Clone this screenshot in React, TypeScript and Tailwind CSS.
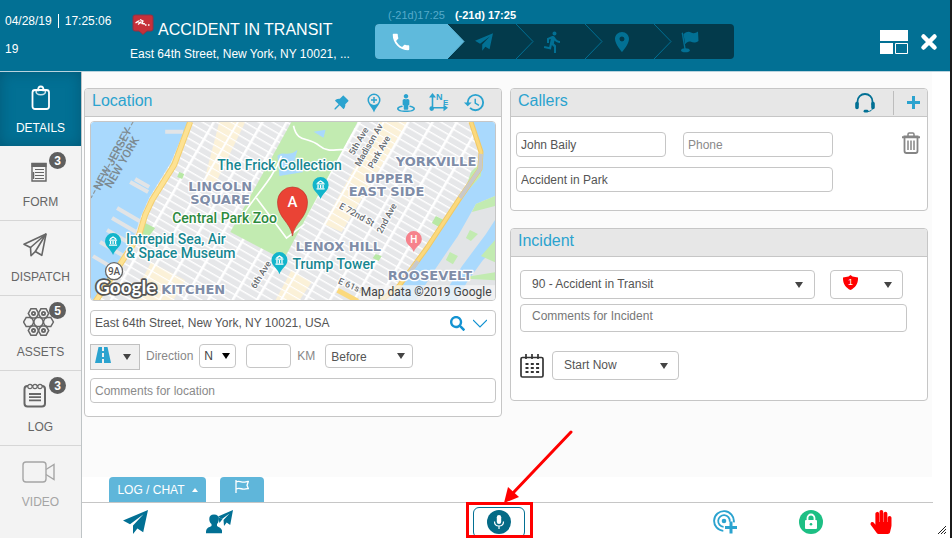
import React, { useState } from 'react';
import { FaHandPaper, FaSearch, FaStreetView } from 'react-icons/fa';
import { AiFillPushpin } from 'react-icons/ai';
import { MdDirectionsRun, MdHistory, MdLocationOn, MdPhone } from 'react-icons/md';

type IconProps = { className?: string };

const PlaneIcon: React.FC<IconProps> = ({ className }) => (
  <svg viewBox="0 0 25 24" fill="currentColor" className={className}>
    <path d="M25 0 0 10.4l7 3.9L20.5 4.2 10 15.6V24l4.4-5.4 5.8 3.6z" />
  </svg>
);

const RaceFlagIcon: React.FC<IconProps> = ({ className }) => (
  <svg viewBox="0 0 18 22" fill="currentColor" className={className}>
    <path d="M.6 2 2 1.6l2.800 17H3.400z" />
    <path d="M2.500 3.200C5.500.4 8 .2 10 1.400s4.200 1.200 7-.9l.5 9.500c-3 2-5.500 1.700-7.500.8s-4 0-5.800 2.400z" />
    <ellipse cx="4.400" cy="19.300" rx="4.300" ry="2" />
  </svg>
);

const ClipboardIcon: React.FC<IconProps> = ({ className }) => (
  <svg viewBox="0 0 20 26" fill="none" stroke="currentColor" className={className}>
    <rect x="1.500" y="5" width="16.500" height="19" rx="2.500" strokeWidth="1.800" />
    <path d="M5 5.500c0 3 1 4.300 4.800 4.300s4.800-1.300 4.800-4.300" strokeWidth="1.600" opacity=".8" />
    <path d="M5 5.400h2.200C7 2.600 8 1.500 9.800 1.500s2.800 1.100 2.600 3.900h2.200" strokeWidth="1.800" />
  </svg>
);

const FormIcon: React.FC<IconProps> = ({ className }) => (
  <svg viewBox="0 0 16 20" fill="none" stroke="currentColor" className={className}>
    <path d="M1 1.500h14V19H1z" strokeWidth="1.400" />
    <path d="M.5 3h15" strokeWidth="4" />
    <path d="M4 7.500h9M4 10.500h9M4 13.500h9M4 16.500h9" strokeWidth="1" />
    <path d="M2.500 10v7" strokeWidth="1.500" />
  </svg>
);

const DispatchIcon: React.FC<IconProps> = ({ className }) => (
  <svg
    viewBox="0 0 24 24"
    fill="none"
    stroke="currentColor"
    strokeWidth="1.600"
    strokeLinejoin="round"
    className={className}
  >
    <path d="M23 1 1 11.200l6.500 3.300.5 8.300 4.300-4.300 6.500 3.800z" />
    <path d="M23 1 7.500 14.500M23 1 12.300 18.500" />
  </svg>
);

const hex = (cx: number, cy: number) =>
  `M${cx - 2.6} ${cy - 4.6}h5.200l2.600 4.600-2.600 4.600h-5.200l-2.600-4.600z`;

const AssetsIcon: React.FC<IconProps> = ({ className }) => (
  <svg viewBox="0 0 32 28" fill="none" stroke="currentColor" className={className}>
    {[[10.500, 5.400], [20.500, 5.400], [5.800, 14], [15.500, 14], [25.200, 14], [10.500, 22.600], [20.500, 22.600]].map(([x, y]) => (
      <path key={`${x}-${y}`} d={hex(x, y)} strokeWidth="1.500" />
    ))}
    {[[10.500, 5.400], [20.500, 5.400], [10.500, 22.600], [20.500, 22.600]].map(([x, y]) => (
      <circle key={`${x}-${y}`} cx={x} cy={y} r="1.600" strokeWidth="1.800" />
    ))}
  </svg>
);

const LogIcon: React.FC<IconProps> = ({ className }) => (
  <svg viewBox="0 0 24 26" fill="none" stroke="currentColor" className={className}>
    <rect x="1.500" y="4" width="20.500" height="20.500" rx="3" strokeWidth="2" />
    <circle cx="7" cy="4.500" r="2.200" strokeWidth="1.200" fill="#f3f3f3" />
    <circle cx="12" cy="4.500" r="2.200" strokeWidth="1.200" fill="#f3f3f3" />
    <circle cx="17" cy="4.500" r="2.200" strokeWidth="1.200" fill="#f3f3f3" />
    <path d="M6 12h12M6 15.200h12M6 18.400h12" strokeWidth="1.800" />
  </svg>
);

const VideoIcon: React.FC<IconProps> = ({ className }) => (
  <svg viewBox="0 0 34 22" fill="none" stroke="currentColor" strokeWidth="1.400" className={className}>
    <rect x="1" y="1" width="23" height="20" rx="3" />
    <path d="m24 8.500 8-5v15l-8-5" />
  </svg>
);

const PinPlusIcon: React.FC<IconProps> = ({ className }) => (
  <svg viewBox="0 0 14 20" className={className}>
    <path
      d="M7 .5a6.500 6.500 0 0 1 6.500 6.500c0 4-4.500 7-6.500 12.500C5 14 .5 11 .5 7A6.500 6.500 0 0 1 7 .5z"
      fill="currentColor"
    />
    <circle cx="7" cy="7" r="5" fill="#e7e7e7" />
    <path d="M7 4v6M4 7h6" stroke="currentColor" strokeWidth="1.500" />
  </svg>
);

const AxesIcon: React.FC<IconProps> = ({ className }) => (
  <svg viewBox="0 0 20 20" fill="currentColor" className={className}>
    <path d="M3.500 0 7 4.500H4.300V14h10.200v-2.600l4.500 3.400-4.500 3.400v-2.600H5a2.300 2.300 0 1 1-2.300-2.300V4.500H0z" />
    <text x="7" y="7" fontSize="9" fontWeight="700" fontFamily="Liberation Sans, sans-serif">N</text>
    <text x="14" y="12" fontSize="8" fontWeight="700" fontFamily="Liberation Sans, sans-serif">E</text>
  </svg>
);

const HeadsetIcon: React.FC<IconProps> = ({ className }) => (
  <svg viewBox="0 0 20 20" fill="none" stroke="currentColor" className={className}>
    <path d="M2.500 12V8.500a7.500 7.500 0 0 1 15 0V12" strokeWidth="1.800" />
    <path d="M2 10.500v4M18 10.500v4" strokeWidth="3.600" strokeLinecap="round" />
    <path d="M17.500 15c0 2-2 3.500-5 3.500" strokeWidth="1" />
    <path d="M10 18.200h2" strokeWidth="2.800" strokeLinecap="round" />
  </svg>
);

const TrashIcon: React.FC<IconProps> = ({ className }) => (
  <svg viewBox="0 0 18 22" fill="none" stroke="currentColor" className={className}>
    <path d="M0 5.200h18" strokeWidth="2" />
    <path d="M1.500 4.200h15M6 4V2.200Q6 1 7.200 1h3.600Q12 1 12 2.200V4" strokeWidth="1.500" />
    <path d="M2.500 6v13q0 2 2 2h9q2 0 2-2V6" strokeWidth="1.800" />
    <path d="M6 8.500v9.500M9 8.500v9.500M12 8.500v9.500" strokeWidth="1.500" />
  </svg>
);

const CalendarIcon: React.FC<IconProps> = ({ className }) => (
  <svg viewBox="0 0 24 24" fill="none" stroke="currentColor" className={className}>
    <rect x="1" y="3.500" width="22" height="19.500" rx="1.500" strokeWidth="1.700" />
    <path d="M6 0v5M12 0v5M18 0v5" strokeWidth="1.700" />
    <path d="M5.500 10h14M5.500 14h14M5.500 18h14" strokeWidth="2.200" strokeDasharray="3 2.300" />
  </svg>
);

const RoadIcon: React.FC<IconProps> = ({ className }) => (
  <svg viewBox="0 0 16 16" className={className}>
    <path d="M3.500 0h9L16 16H0z" fill="currentColor" />
    <path d="M8 0v4M8 6v4M8 12v4" stroke="#f0f0f0" strokeWidth="2" />
  </svg>
);

const FlagIcon: React.FC<IconProps> = ({ className }) => (
  <svg viewBox="0 0 14 13" fill="none" stroke="currentColor" strokeWidth="1.300" className={className}>
    <path d="M1 0v13M1 2c3-1.500 5 0 7 .2s4-1 5.300-.7L12 5.200l1.300 3.300c-2 0-3.300.8-5.300.6S4 7.500 1 9" />
  </svg>
);

const PersonPlaneIcon: React.FC<IconProps> = ({ className }) => (
  <svg viewBox="0 0 27 24" fill="currentColor" className={className}>
    <path d="M8 4.500c3.600 0 5 2 4.800 5-.2 2-.8 3.500-1.800 4.500v2c2 1.300 4.500 2 5 4.500v2.700H0C-.3 17.500 3 17.500 5.500 16v-2C4.300 13 3.400 11.500 3.300 9.500 3.100 6.500 4.500 4.500 8 4.500z" />
    <path d="M27 0 12 6.500l4 2.500L23.500 3.500 17.500 10l.5 6 2.700-3.500 3.500 2.500z" />
    <path d="m12 7 1.500 6 3-4z" />
  </svg>
);

const MicIcon: React.FC<IconProps> = ({ className }) => (
  <svg viewBox="0 0 24 24" className={className}>
    <circle cx="12" cy="12" r="12" fill="#046a86" />
    <rect x="9.800" y="5" width="4.400" height="9" rx="2.200" fill="#fff" />
    <path d="M7.500 11.500c0 6 9 6 9 0M12 16v3" fill="none" stroke="#fff" strokeWidth="1.200" />
  </svg>
);

const TargetPlusIcon: React.FC<IconProps> = ({ className }) => (
  <svg viewBox="0 0 24 24" fill="none" stroke="currentColor" className={className}>
    <circle cx="11" cy="11" r="9.900" strokeWidth="1.900" strokeDasharray="47 15.200" transform="rotate(94 11 11)" />
    <circle cx="11" cy="11" r="5.800" strokeWidth="1.800" strokeDasharray="27 9.500" transform="rotate(94 11 11)" />
    <circle cx="11" cy="11" r="2.300" fill="currentColor" stroke="none" />
    <path d="M18 11.500v12M12 17.500h12" strokeWidth="3" />
  </svg>
);

const LockIcon: React.FC<IconProps> = ({ className }) => (
  <svg viewBox="0 0 24 24" className={className}>
    <circle cx="12" cy="12" r="12" fill="#1dbf84" />
    <path d="M8.500 11V8a3.500 3.500 0 0 1 7 0v3" fill="none" stroke="#fff" strokeWidth="1.800" />
    <rect x="6" y="10" width="12" height="9" rx="1" fill="#fff" />
    <circle cx="12" cy="14.200" r="1.300" fill="#1dbf84" />
  </svg>
);

const LayoutIcon: React.FC<IconProps> = ({ className }) => (
  <svg viewBox="0 0 28 24" className={className}>
    <path d="M0 0h28v11H0zM0 13h13v11H0z" fill="#fff" />
    <path d="M15.500 13.500h12v10h-12z" fill="none" stroke="#fff" />
  </svg>
);

const IncidentBadge: React.FC<IconProps> = ({ className }) => (
  <svg viewBox="0 0 22 21" className={className}>
    <path
      d="M3 1h16q2 0 2 2v12q0 2-2 2h-4l-4 3.500L7 17H3q-2 0-2-2V3q0-2 2-2z"
      fill="#c6303a"
      stroke="#8c3347"
    />
    <path
      d="M3.500 9c2-1 2.500-2 4-2.500M6 10.500l3.500-3M8 5.500l3 1.500-1 2.500 3 .5M5 7.500l4 1.500M13 11h1.500M16 11h1.500"
      fill="none"
      stroke="#fff"
      strokeWidth="1.300"
    />
  </svg>
);

const Caret: React.FC<IconProps> = ({ className }) => (
  <svg viewBox="0 0 8 6" fill="currentColor" className={className}>
    <path d="M0 0h8L4 6z" />
  </svg>
);

interface SelectProps {
  label: string;
  options: string[];
  className: string;
  caretClass: string;
}

const Select: React.FC<SelectProps> = ({ label, options, className, caretClass }) => (
  <div className="relative">
    <select
      aria-label={label}
      className={`block appearance-none rounded border border-[#c6c6c6] bg-white ${className}`}
    >
      {options.map((option) => (
        <option key={option}>{option}</option>
      ))}
    </select>
    <Caret className={`pointer-events-none absolute inset-y-0 my-auto h-[6px] w-2 ${caretClass}`} />
  </div>
);

const steps = [
  { name: 'Call', icon: <MdPhone className="size-[22px]" /> },
  { name: 'Dispatch', icon: <PlaneIcon className="h-[18px] w-[18px]" /> },
  { name: 'En route', icon: <MdDirectionsRun className="size-6" /> },
  { name: 'On scene', icon: <MdLocationOn className="size-6" /> },
  { name: 'Finish', icon: <RaceFlagIcon className="h-[22px] w-[18px]" /> },
];

const Header: React.FC = () => (
  <header className="flex h-[72px] shrink-0 border-b border-[#b9d3de] bg-[#027094] text-white">
    <div className="w-[130px] pl-[5px] pt-3 text-xs">
      <div className="flex h-[18px] items-center">
        <span>04/28/19</span>
        <span className="mx-[6px] h-[14px] w-px bg-white" />
        <span>17:25:06</span>
      </div>
      <div className="mt-[10px] leading-[18px]">19</div>
    </div>
    <div className="w-[245px] pt-[10px]">
      <h1 className="flex items-center text-base leading-6">
        <IncidentBadge className="mr-1 mb-1 ml-[2px] h-[21px] w-[22px]" />
        <span className="mt-2">ACCIDENT IN TRANSIT</span>
      </h1>
      <p className="mt-1 text-xs leading-4">East 64th Street, New York, NY 10021, ...</p>
    </div>
    <div className="pt-2">
      <div className="flex h-4 gap-[10px] pl-[13px] text-[11px] leading-[15px]">
        <span className="text-[#55abcb]">(-21d)17:25</span>
        <span className="font-bold">(-21d) 17:25</span>
      </div>
      <ol className="flex h-[35px] overflow-hidden rounded bg-[#033a4b]">
        {steps.map((step, i) => (
          <li
            key={step.name}
            aria-label={step.name}
            className={
              i === 0
                ? 'relative flex w-[72px] items-center justify-center bg-[#5fbadc] pr-5'
                : i === steps.length - 1
                  ? 'flex w-[80px] items-center justify-center pr-2 text-[#027094]'
                  : 'relative flex w-[69px] items-center justify-center pl-1 text-[#027094]'
            }
          >
            {step.icon}
            {i < steps.length - 1 && (
              <svg viewBox="0 0 18 35" className="absolute left-full top-0 h-[35px] w-[18px]">
                <path
                  d="M0 0l17 17.500L0 35"
                  fill={i === 0 ? '#5fbadc' : 'none'}
                  stroke={i === 0 ? '#5fbadc' : '#027094'}
                />
              </svg>
            )}
          </li>
        ))}
      </ol>
    </div>
    <div className="ml-auto flex items-center gap-3 pr-3 pt-3">
      <button type="button" aria-label="Change layout">
        <LayoutIcon className="h-6 w-7" />
      </button>
      <button type="button" aria-label="Close">
        <svg viewBox="0 0 18 18" className="size-[18px]">
          <path d="m3.500 3.500 11 11m0-11-11 11" stroke="#fff" strokeWidth="4.500" strokeLinecap="round" />
        </svg>
      </button>
    </div>
  </header>
);

const tabs = [
  { name: 'DETAILS', icon: <ClipboardIcon className="h-[26px] w-5" /> },
  { name: 'FORM', icon: <FormIcon className="mr-1 h-5 w-4" />, count: 3 },
  { name: 'DISPATCH', icon: <DispatchIcon className="mr-3 mb-1 size-6" /> },
  { name: 'ASSETS', icon: <AssetsIcon className="mr-1 h-7 w-8" />, count: 5 },
  { name: 'LOG', icon: <LogIcon className="mr-3 mb-1 h-[26px] w-6" />, count: 3 },
  { name: 'VIDEO', icon: <VideoIcon className="mr-1 h-[22px] w-[34px]" />, disabled: true },
];

const Sidebar: React.FC = () => {
  const [active, setActive] = useState('DETAILS');

  return (
    <nav className="flex w-[82px] shrink-0 flex-col border-r border-[#bfc4c6] bg-[#f3f3f3]">
      {tabs.map((tab) => (
        <button
          key={tab.name}
          type="button"
          disabled={tab.disabled}
          onClick={() => setActive(tab.name)}
          className={
            active === tab.name
              ? 'relative flex h-[74px] flex-col items-center bg-[#027094] pt-[10px] text-xs text-white shadow-[inset_0_0_14px_#035a78]'
              : tab.disabled
                ? 'relative flex h-[75px] flex-col items-center pt-[10px] text-xs text-[#a5a5a5]'
                : 'relative flex h-[75px] flex-col items-center border-b border-[#d6d6d6] pt-[10px] text-xs text-[#666]'
          }
        >
          <span className="flex h-[31px] items-center justify-center">{tab.icon}</span>
          <span className="mt-[5px] leading-5">{tab.name}</span>
          {tab.count && (
            <span className="absolute right-[15px] top-[6px] flex size-[17px] items-center justify-center rounded-full bg-[#5e5e5e] text-xs font-bold text-white">
              {tab.count}
            </span>
          )}
        </button>
      ))}
    </nav>
  );
};

interface PanelProps {
  title: string;
  tools?: React.ReactNode;
  children: React.ReactNode;
}

const Panel: React.FC<PanelProps> = ({ title, tools, children }) => (
  <section className="overflow-hidden rounded border border-[#c6c6c6] bg-white">
    <div className="flex h-7 items-center justify-between border-b border-[#c6c6c6] bg-[#e7e7e7] pl-[7px]">
      <h2 className="pb-1 text-base leading-5 text-[#2ba3cf]">{title}</h2>
      {tools}
    </div>
    {children}
  </section>
);

const poiText = { fontFamily: 'Roboto, sans-serif', fontWeight: 500, fontSize: 14 };
const areaText = { fontFamily: 'DejaVu Sans, sans-serif', fontWeight: 700, fontSize: 13 };
const streetText = { fontFamily: 'Roboto, sans-serif', fontWeight: 500, fontSize: 9 };

const CityMap: React.FC = () => (
  <svg
    viewBox="0 0 403 178"
    preserveAspectRatio="xMidYMid slice"
    role="img"
    aria-label="Map"
    className="block h-[178px] w-full"
  >
    <defs>
      <pattern id="blocks" width="21" height="7" patternUnits="userSpaceOnUse" patternTransform="rotate(30)">
        <rect width="21" height="7" fill="#e6e7e9" />
        <path d="M0 0h21" stroke="#fff" strokeWidth="2.800" />
        <path d="M0 0v7" stroke="#fff" strokeWidth="5" />
      </pattern>
      <pattern id="shops" width="21" height="7" patternUnits="userSpaceOnUse" patternTransform="rotate(30)">
        <rect width="21" height="7" fill="#fbf1d8" />
        <path d="M0 0h21" stroke="#fff" strokeWidth="2.200" />
        <path d="M0 0v7" stroke="#fff" strokeWidth="4" />
      </pattern>
    </defs>
    <rect width="403" height="178" fill="url(#blocks)" />
    <path d="m128 0 26 0-30 62-14 8zM288 0h28l-66 110-18-8zM200 148l20 12-12 18h-24zM60 140l34 18-12 20H40z" fill="url(#shops)" />

    {/* Hudson */}
    <path d="M0 0h97L80 40 58 76l-8 18-6 18-22 36-18 30H0z" fill="#a9d9fd" />
    <path d="M74 10h18M39 60l18 10M44 57l14 8M26 86l24 14M21 96l24 14M16 108l24 14M9 120l24 14M2 134l22 13" stroke="#e2e4e6" strokeWidth="4" />
    <path d="M42 0 0 76" fill="none" stroke="#8f989c" strokeWidth="1.200" strokeDasharray="4 2" />

    {/* parks */}
    <path d="M200 0h66L193 136l-12-4-42-22z" fill="#c2ebb1" />
    <path d="M186 34c6-6 10 2 20-6l-4 14 10 8-24 4zM222 10l12-2-2 8z" fill="#a9d9fd" />
    <path d="M202 4c4 18 14 10 26 20s22-2 32 8M150 96c14-24 30-36 40-62M165 76l30 40 18-14" fill="none" stroke="#fff" strokeWidth="1.600" />
    <path d="m78 46 4-8 4 4-4 8zM88 50l5 2-2 5-5-2zM52 100l12 6-6 8-10-2zM344 94l8 4-5 7-7-4zM284 132l6 2-3 5-6-3z" fill="#b8e8a5" />

    {/* East River and islands */}
    <path d="M381 0h22v178H300l36-52 33-50 20-30 2-16z" fill="#a9d9fd" />
    <path d="m389 54-18 20 8-24 10-10z" fill="#c2ebb1" />
    <path d="M403 74 384 82l-18 32-22 32-20 32h24l22-34 24-32 9-14z" fill="#e2e4e6" />
    <path d="m403 74-19 8-4 8 23-6zM378 108l8 4-7 7-5-3zM358 130l8 4-5 8-7-4z" fill="#c2ebb1" />
    <path d="m403 126-12 12-16 22-10 18h38z" fill="#e2e4e6" />
    <path d="m403 118-14 16 14 6zM366 156l37-6v8z" fill="#c2ebb1" />

    {/* highways */}
    <g fill="none" strokeLinejoin="round">
      <path d="M99 0 83 43 61 78l-7 15-6 20-24 37-20 30" stroke="#f3cf71" strokeWidth="6" />
      <path d="M99 0 83 43 61 78l-7 15-6 20-24 37-20 30" stroke="#fde293" strokeWidth="4" />
      <path d="m379 0 10 30-1 17-20 29-33 50-28 38-20 16" stroke="#f0c966" strokeWidth="5" />
      <path d="m379 0 10 30-1 17-20 29-33 50-28 38-20 16" stroke="#fbd97d" strokeWidth="3" />
      <path d="m389 32-1 15-20 29M326 139l-12 17" stroke="#c9c9c9" strokeWidth="4" />
      <path d="m246 168 22 12" stroke="#fbd97d" strokeWidth="5" />
    </g>

    {/* area names */}
    <g style={areaText} fill="#7f8da8" stroke="#fff" strokeWidth="2.500" paintOrder="stroke" strokeLinejoin="round">
      <text x="97" y="69">LINCOLN</text>
      <text x="99" y="82">SQUARE</text>
      <text x="304" y="44">YORKVILLE</text>
      <text x="273" y="61">UPPER</text>
      <text x="257" y="74">EAST SIDE</text>
      <text x="204" y="129">LENOX HILL</text>
      <text x="296" y="158">ROOSEVELT</text>
      <text x="70" y="172">KITCHEN</text>
    </g>

    {/* street names */}
    <g style={streetText} fill="#666b70" stroke="#fff" strokeWidth="2" paintOrder="stroke">
      <text transform="translate(262 34) rotate(-60)">5th Ave</text>
      <text transform="translate(268 45) rotate(-60)">Madison Av</text>
      <text transform="translate(281 47) rotate(-60)">Park Ave</text>
      <text transform="translate(247 86) rotate(29)">E 72nd St</text>
      <text transform="translate(290 112) rotate(-62)">2nd Ave</text>
      <text transform="translate(164 167) rotate(-58)">6th Ave</text>
      <text transform="translate(246 161) rotate(24)">E 61st</text>
    </g>
    <g style={{ ...streetText, fontSize: 11.5 }} fill="#7c8990">
      <text transform="translate(9 69) rotate(-62)">NEW JERSEY</text>
      <text transform="translate(20 67) rotate(-60)">NEW YORK</text>
    </g>

    {/* places */}
    <g style={poiText} fill="#178791" stroke="#fff" strokeWidth="2.500" paintOrder="stroke" strokeLinejoin="round">
      <text x="126" y="48">The Frick Collection</text>
      <text x="81" y="101" fill="#2d8a3e">Central Park Zoo</text>
      <text x="35" y="122">Intrepid Sea, Air</text>
      <text x="35" y="136">&amp; Space Museum</text>
      <text x="201" y="147">Trump Tower</text>
    </g>
    {[[22, 119], [229, 63], [188, 138]].map(([x, y]) => (
      <g key={x} transform={`translate(${x} ${y})`}>
        <path d="M0 14C-2 8-8 6-8 0a8 8 0 0 1 16 0c0 6-6 8-8 14z" fill="#12b5cb" />
        <path d="M-4-1h8M-4 4h8M-3-2 0-4l3 2M-2.500 0v3M0 0v3M2.500 0v3" stroke="#fff" strokeWidth="1.300" fill="none" />
      </g>
    ))}
    <path d="M322 130c-2-6-8-7-8-13a8 8 0 0 1 16 0c0 6-6 7-8 13z" fill="#f6828c" />
    <text x="322" y="121" textAnchor="middle" style={{ ...poiText, fontSize: 10 }} fill="#fff">H</text>

    {/* incident marker */}
    <path d="M201 114c-2-14-15-18-15-34a15 15 0 0 1 30 0c0 16-13 20-15 34z" fill="#ea4335" stroke="#b7362b" strokeWidth=".6" />
    <text x="201" y="85" textAnchor="middle" style={{ ...poiText, fontSize: 15 }} fill="#fff">A</text>

    <circle cx="23" cy="149" r="8.500" fill="#fff" stroke="#666" strokeWidth="1.300" />
    <text x="23" y="153" textAnchor="middle" style={{ ...streetText, fontSize: 10 }} fill="#555">9A</text>
    <text
      x="5"
      y="172"
      fill="#fff"
      stroke="#555"
      strokeWidth="3.500"
      paintOrder="stroke"
      strokeLinejoin="round"
      style={{ fontFamily: 'Lato, sans-serif', fontWeight: 700, fontSize: 19 }}
    >
      Google
    </text>
    <rect x="267" y="163" width="136" height="15" fill="#f5f5f5" opacity=".75" />
    <text x="269" y="174" fill="#444" style={{ fontFamily: 'Roboto, sans-serif', fontSize: 12 }}>
      Map data ©2019 Google
    </text>
  </svg>
);

const fieldClass =
  'h-[25px] min-w-0 rounded border border-[#c6c6c6] bg-white px-1 text-xs text-[#555] placeholder:text-[#8a8a8a]';

const LocationPanel: React.FC = () => {
  const [address, setAddress] = useState('East 64th Street, New York, NY 10021, USA');

  return (
    <Panel
      title="Location"
      tools={
        <div className="flex items-center gap-[14px] pr-[15px] text-[#2ba3cf]">
          <button type="button" aria-label="Pin"><AiFillPushpin className="size-[19px]" /></button>
          <button type="button" aria-label="Add place"><PinPlusIcon className="h-5 w-[18px]" /></button>
          <button type="button" aria-label="Street view"><FaStreetView className="size-[18px]" /></button>
          <button type="button" aria-label="Coordinates"><AxesIcon className="size-5" /></button>
          <button type="button" aria-label="History"><MdHistory className="size-[23px]" /></button>
        </div>
      }
    >
      <div className="px-[5px] pb-[13px] pt-1">
        <div className="overflow-hidden rounded border border-[#c6c6c6]">
          <CityMap />
        </div>

        <div className="mt-[9px] flex h-[26px] items-center rounded border border-[#c6c6c6] pr-2">
          <input
            aria-label="Address"
            value={address}
            onChange={(e) => setAddress(e.target.value)}
            className="min-w-0 flex-1 px-1 text-xs text-[#555]"
          />
          <button type="button" aria-label="Search" className="text-[#1493d2]">
            <FaSearch className="size-[15px]" />
          </button>
          <button type="button" aria-label="Show more" className="ml-2">
            <svg viewBox="0 0 14 9" className="h-[9px] w-[14px]" fill="none" stroke="#1493d2" strokeWidth="1.200">
              <path d="m0 1 7 7 7-7" />
            </svg>
          </button>
        </div>

        <div className="mt-2 flex items-start text-xs text-[#888]">
          <button
            type="button"
            aria-label="Road type"
            className="flex h-[26px] w-[50px] items-center justify-between border border-[#c0c0c0] bg-[#f0f0f0] pl-1 pr-2 text-[#444]"
          >
            <RoadIcon className="mb-1 size-4 text-[#2ba3cf]" />
            <Caret className="h-[6px] w-2" />
          </button>
          <label htmlFor="direction" className="ml-[6px] leading-6">Direction</label>
          <div className="relative ml-[6px]">
            <select
              id="direction"
              className="block h-6 w-[37px] appearance-none rounded border border-[#c6c6c6] bg-white pl-1 text-xs text-[#444]"
            >
              <option>N</option>
              <option>S</option>
              <option>E</option>
              <option>W</option>
            </select>
            <Caret className="pointer-events-none absolute inset-y-0 right-[6px] my-auto h-[6px] w-2 text-black" />
          </div>
          <input id="distance" className="ml-[10px] h-6 w-[45px] rounded border border-[#c6c6c6] bg-white px-1 text-[#444]" />
          <label htmlFor="distance" className="ml-[6px] mr-[10px] leading-6">KM</label>
          <Select
            label="Position"
            options={['Before', 'After']}
            className="h-6 w-[88px] pl-[5px] pt-[2px] text-xs text-[#555]"
            caretClass="right-[8px] text-[#444]"
          />
        </div>

        <input
          aria-label="Comments for location"
          placeholder="Comments for location"
          className={`mt-2 block w-full ${fieldClass}`}
        />
      </div>
    </Panel>
  );
};

const CallersPanel: React.FC = () => (
  <Panel
    title="Callers"
    tools={
      <div className="flex items-center">
        <button type="button" aria-label="Headset" className="mr-[18px] text-[#027094]">
          <HeadsetIcon className="size-5" />
        </button>
        <button
          type="button"
          aria-label="Add caller"
          className="flex h-6 items-center border-l border-[#bdbdbd] pl-[13px] pr-[7px]"
        >
          <svg viewBox="0 0 13 13" className="size-[13px]">
            <path d="M6.500 0v13M0 6.500h13" stroke="#2ba3cf" strokeWidth="3" />
          </svg>
        </button>
      </div>
    }
  >
    <div className="flex items-start px-[5px] pb-[18px] pt-[15px]">
      <div className="grid w-[317px] grid-cols-2 gap-x-[17px] gap-y-[10px]">
        <input aria-label="Caller name" defaultValue="John Baily" className={fieldClass} />
        <input aria-label="Phone" placeholder="Phone" className={fieldClass} />
        <input aria-label="Caller comment" defaultValue="Accident in Park" className={`col-span-2 ${fieldClass}`} />
      </div>
      <button type="button" aria-label="Remove caller" className="ml-auto pr-[2px] text-[#858585]">
        <TrashIcon className="h-[22px] w-[18px]" />
      </button>
    </div>
  </Panel>
);

const IncidentPanel: React.FC = () => (
  <Panel title="Incident">
    <div className="px-[9px] pb-5 pt-[13px]">
      <div className="flex gap-[15px]">
        <Select
          label="Incident type"
          options={['90 - Accident in Transit']}
          className="h-[29px] w-[295px] pb-[2px] pl-[11px] text-xs text-[#555]"
          caretClass="right-3 text-[#444]"
        />
        <button
          type="button"
          aria-label="Priority"
          className="flex h-[29px] w-[73px] items-center justify-between rounded border border-[#c6c6c6] pl-3 pr-[10px] text-[#444]"
        >
          <svg viewBox="0 0 15 15" className="mb-1 size-[15px]">
            <path d="M7.500 0 9.500 1.500 15 2.500c.3 6-2.500 10-7.500 12.500C2.500 12.500-.3 8.500 0 2.500l5.500-1z" fill="#f00" />
            <text x="7.500" y="10" textAnchor="middle" fontSize="9" fill="#fff" fontFamily="Liberation Sans, sans-serif">1</text>
          </svg>
          <Caret className="h-[6px] w-2" />
        </button>
      </div>
      <textarea
        rows={1}
        aria-label="Comments for Incident"
        placeholder="Comments for Incident"
        className="mt-[5px] block h-7 w-[387px] resize-none overflow-hidden rounded border border-[#c6c6c6] px-[11px] pt-[3px] text-xs text-[#555] placeholder:text-[#777]"
      />
      <div className="mt-[19px] flex items-center gap-2">
        <CalendarIcon className="size-6 text-[#333]" />
        <Select
          label="Start time"
          options={['Start Now', 'Start Later']}
          className="h-[29px] w-[127px] pb-[2px] pl-[11px] text-xs text-[#555]"
          caretClass="right-[11px] text-[#444]"
        />
      </div>
    </div>
  </Panel>
);

const Toolbar: React.FC = () => (
  <footer className="mr-[17px] shrink-0">
    <div className="flex gap-[14px] border-b border-[#c6c6c6] pl-[27px]">
      <button
        type="button"
        className="flex h-[25px] w-[97px] items-center justify-center gap-[7px] rounded-t bg-[#5fb6da] text-xs text-white"
      >
        LOG / CHAT
        <svg viewBox="0 0 6 4" className="h-1 w-[6px]" fill="#fff">
          <path d="M0 4h6L3 0z" />
        </svg>
      </button>
      <button type="button" aria-label="Flags" className="flex h-[25px] w-11 justify-center rounded-t bg-[#5fb6da] pt-[3px] text-white">
        <FlagIcon className="h-[13px] w-[14px]" />
      </button>
    </div>
    <div className="grid h-[35px] grid-cols-[46fr_54fr] text-[#027094]">
      <div className="flex items-start gap-[58px] pl-[41px] pt-[7px]">
        <button type="button" aria-label="Send"><PlaneIcon className="h-6 w-[25px]" /></button>
        <button type="button" aria-label="Send to person"><PersonPlaneIcon className="h-6 w-[27px]" /></button>
      </div>
      <div className="flex items-start">
        <div className="relative pt-1">
          <button
            type="button"
            aria-label="Voice message"
            className="flex h-[31px] w-[52px] justify-center rounded-md border border-[#027094] pt-[2px]"
          >
            <MicIcon className="size-6" />
          </button>
          {/* pointer to the voice button */}
          <div className="pointer-events-none absolute -left-[7px] -top-px h-9 w-[67px] border-[3px] border-[#f00]" />
          <svg
            viewBox="0 0 108 73"
            className="pointer-events-none absolute -left-[7px] bottom-full h-[73px] w-[108px]"
          >
            <path d="M105 2 47 63" stroke="#f00" strokeWidth="3" strokeLinecap="round" />
            <path d="m38 73 4-16 11 10z" fill="#f00" />
          </svg>
        </div>
        <div className="ml-auto flex gap-[62px] pr-10 pt-[7px]">
          <button type="button" aria-label="Add target" className="text-[#2ba3cf]"><TargetPlusIcon className="size-6" /></button>
          <button type="button" aria-label="Lock"><LockIcon className="size-6" /></button>
          <button type="button" aria-label="Stop" className="-ml-4 text-[#f00]"><FaHandPaper className="size-6" /></button>
        </div>
      </div>
    </div>
  </footer>
);

const App: React.FC = () => (
  <div
    className="flex min-h-screen flex-col border-r-2 border-[#1b1b1b] bg-white"
    style={{ fontFamily: '"Liberation Sans", Arial, sans-serif' }}
  >
    <Header />
    <div className="relative flex flex-1">
      <Sidebar />
      <div className="flex min-w-0 flex-1 flex-col">
        <main className="mr-[18px] grid flex-1 grid-cols-2 items-start gap-2 bg-[#fbfbfb] pb-4 pl-[2px] pr-1 pt-4">
          <LocationPanel />
          <div className="flex flex-col gap-[17px]">
            <CallersPanel />
            <IncidentPanel />
          </div>
        </main>
        <Toolbar />
      </div>
      <svg viewBox="0 0 8 8" className="absolute bottom-1 right-1 size-2" stroke="#222" strokeWidth="1">
        <path d="M0 8 8 0M3 8l5-5M6 8l2-2" />
      </svg>
    </div>
  </div>
);

export default App;
